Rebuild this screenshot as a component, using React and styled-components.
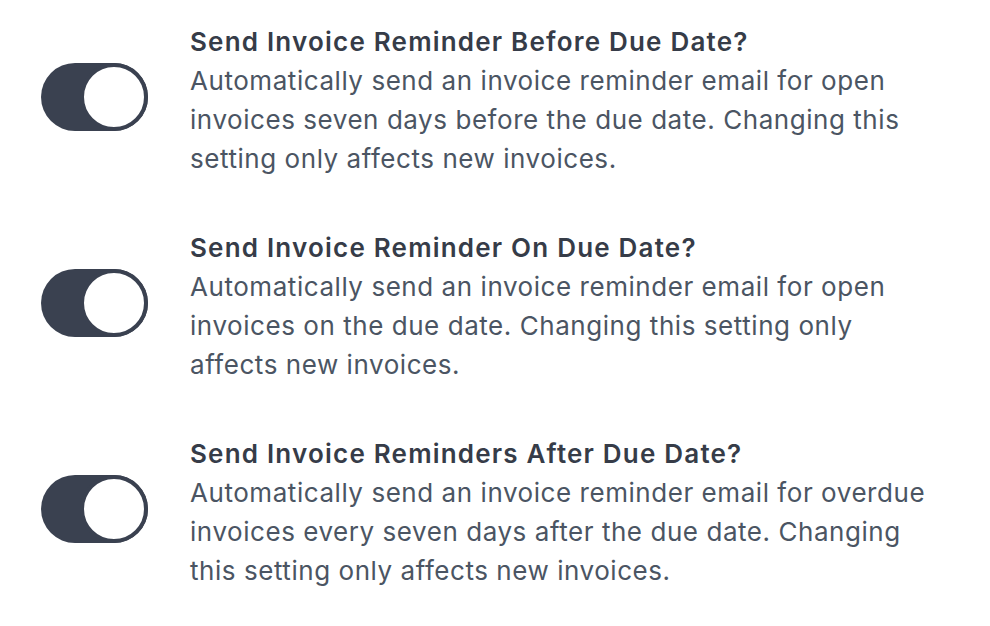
import styled, { createGlobalStyle } from 'styled-components';

const GlobalStyle = createGlobalStyle`
  body {
    margin: 0;
    background: #ffffff;
    font-family: Inter, "Noto Sans", sans-serif;
  }
`;

const List = styled.div`
  display: flex;
  flex-direction: column;
  gap: 50px;
  padding: 22px 0 0 41px;
`;

const Row = styled.div`
  display: flex;
  align-items: flex-start;
  gap: 42px;
`;

const Track = styled.button`
  flex: none;
  display: flex;
  justify-content: ${(p) => (p.on ? 'flex-end' : 'flex-start')};
  width: 107px;
  height: 68px;
  margin-top: 41px;
  padding: 0;
  border: none;
  border-radius: 34px;
  background: #3a4150;
  cursor: pointer;
`;

const Knob = styled.span`
  width: 60px;
  height: 60px;
  border-radius: 50%;
  background: #ffffff;
  border: 4px solid #3a4150;
`;

const Text = styled.div`
  width: 745px;
  font-size: 26px;
  line-height: 39px;
`;

const Title = styled.h3`
  margin: 0;
  font-size: 26px;
  font-weight: 600;
  letter-spacing: 1.2px;
  color: #363c48;
`;

const Description = styled.p`
  margin: 0;
  letter-spacing: 0.55px;
  color: #4b5563;
`;

const settings = [
  {
    title: 'Send Invoice Reminder Before Due Date?',
    text: 'Automatically send an invoice reminder email for open invoices seven days before the due date. Changing this setting only affects new invoices.',
  },
  {
    title: 'Send Invoice Reminder On Due Date?',
    text: 'Automatically send an invoice reminder email for open invoices on the due date. Changing this setting only affects new invoices.',
  },
  {
    title: 'Send Invoice Reminders After Due Date?',
    text: 'Automatically send an invoice reminder email for overdue invoices every seven days after the due date. Changing this setting only affects new invoices.',
  },
];

const App = () => (
  <>
    <GlobalStyle />
    <List>
      {settings.map((s) => (
        <Row key={s.title}>
          <Track on>
            <Knob />
          </Track>
          <Text>
            <Title>{s.title}</Title>
            <Description>{s.text}</Description>
          </Text>
        </Row>
      ))}
    </List>
  </>
);

export default App;
